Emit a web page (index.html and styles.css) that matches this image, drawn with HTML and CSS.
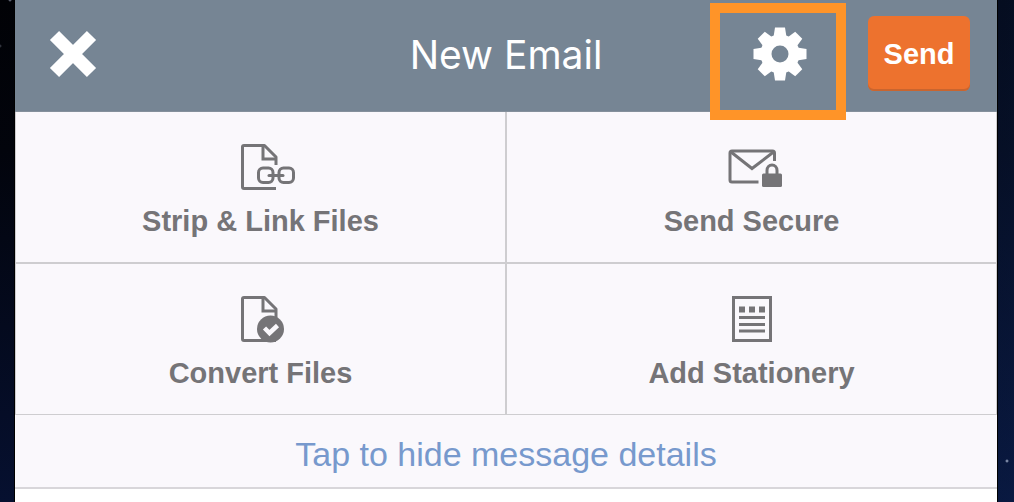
FILE: index.html
```html
<!DOCTYPE html>
<html lang="en">
<head>
  <meta charset="UTF-8" />
  <meta name="viewport" content="width=device-width, initial-scale=1.0"/>
  <title>New Email</title>
  <link rel="stylesheet" href="styles.css">
</head>
<body>
  <div class="compose">
    <header class="compose-header">
      <button type="button" class="icon-button close-button" aria-label="Close">
        <svg width="48" height="48" viewBox="0 0 48 48">
          <path d="M5.500 5.500 L42.500 42.500 M42.500 5.500 L5.500 42.500" stroke="#fff" stroke-width="13" fill="none"/>
        </svg>
      </button>
      <h1>New Email</h1>
      <div class="header-actions">
        <button type="button" class="icon-button settings-button" aria-label="Settings">
          <svg width="54" height="54" viewBox="-27 -27 54 54">
            <g fill="#fff">
              <path id="tooth" d="M-5 -26.500 H5 L6.500 -17 H-6.500 Z"/>
              <use href="#tooth" transform="rotate(45)"/>
              <use href="#tooth" transform="rotate(90)"/>
              <use href="#tooth" transform="rotate(135)"/>
              <use href="#tooth" transform="rotate(180)"/>
              <use href="#tooth" transform="rotate(225)"/>
              <use href="#tooth" transform="rotate(270)"/>
              <use href="#tooth" transform="rotate(315)"/>
            </g>
            <circle r="14" fill="none" stroke="#fff" stroke-width="11"/>
          </svg>
        </button>
        <button type="submit" class="send-button">Send</button>
      </div>
    </header>

    <main>
      <div class="options">
        <button type="button" class="option">
          <svg width="70" height="48" viewBox="-14 0 70 48" fill="none" stroke="#757477" stroke-width="3">
            <path d="M36 22 V14 L24.500 2.500 H4 Q2.500 2.500 2.500 4 V44 Q2.500 45.500 4 45.500 H36" stroke-linejoin="round"/>
            <path d="M23 3 V16 H36"/>
            <rect x="18.500" y="25" width="14.500" height="14.500" rx="4.500"/>
            <rect x="39" y="25" width="14.500" height="14.500" rx="4.500"/>
            <path d="M29 32.500 H43" stroke-linecap="round"/>
          </svg>
          <span>Strip &amp; Link Files</span>
        </button>
        <button type="button" class="option">
          <svg width="62" height="48" viewBox="-6 0 62 48" fill="none" stroke="#757477" stroke-width="3">
            <path d="M47.500 18 V10 Q47.500 8 45.500 8 H5 Q3 8 3 10 V37 Q3 39 5 39 H31.500"/>
            <path d="M4 9 L25 25.500 L46.500 9"/>
            <path d="M40 32 V27.500 A5 5.500 0 0 1 50 27.500 V32"/>
            <rect x="35" y="30.500" width="20" height="13.500" rx="1.500" fill="#757477" stroke="none"/>
          </svg>
          <span>Send Secure</span>
        </button>
        <button type="button" class="option">
          <svg width="46" height="48" viewBox="-2 0 46 48" fill="none" stroke="#757477" stroke-width="3">
            <path d="M36 24 V14 L24.500 2.500 H4 Q2.500 2.500 2.500 4 V44 Q2.500 45.500 4 45.500 H36" stroke-linejoin="round"/>
            <path d="M23 3 V16 H36"/>
            <circle cx="30.500" cy="34" r="13.500" fill="#757477" stroke="none"/>
            <path d="M24.500 33 L29.500 38 L37.500 30.500" stroke="#faf8fc" stroke-width="4.500"/>
          </svg>
          <span>Convert Files</span>
        </button>
        <button type="button" class="option">
          <svg width="42" height="48" viewBox="0 0 42 48" fill="none" stroke="#757477" stroke-width="3">
            <rect x="2.500" y="2.500" width="37" height="43"/>
            <path d="M8 14.500 H14 M18 14.500 H24 M28 14.500 H34" stroke-width="6"/>
            <path d="M8 22.500 H34 M8 29.500 H34 M8 36 H34"/>
          </svg>
          <span>Add Stationery</span>
        </button>
      </div>
      <button type="button" class="details-toggle">Tap to hide message details</button>
    </main>
  </div>
</body>
</html>
```
FILE: styles.css
```css
* {
  box-sizing: border-box;
}
body {
  margin: 0;
  min-height: 100vh;
  padding: 0 17px 0 15px;
  display: flex;
  font-family: "Liberation Sans", Arial, sans-serif;
  /* night sky behind the compose sheet */
  background:
    radial-gradient(circle at 10px 0, #8d93a5 0, transparent 2px),
    radial-gradient(circle at 0 46px, #4a4d58 0, transparent 2px),
    radial-gradient(circle at 1007px 461px, #b4bfd8 0, transparent 2px),
    linear-gradient(100deg, transparent 60%, rgba(14, 38, 90, 0.4)),
    linear-gradient(#010206 0%, #02040c 30%, #061030 100%);
}
button {
  border: none;
  margin: 0;
  padding: 0;
  font-family: inherit;
  cursor: pointer;
}
svg {
  display: block;
}
.compose {
  flex: 1;
  background: #fff;
  box-shadow: 0 0 0 1px #000;
}
.compose-header {
  display: grid;
  grid-template-columns: 1fr auto 1fr;
  align-items: center;
  padding: 16px 27px 20px;
  background: #768594;
  border-bottom: 1px solid #85909c;
}
.compose-header h1 {
  margin: 0;
  padding-top: 2px;
  font-family: Inter, "Liberation Sans", sans-serif;
  font-size: 39px;
  font-weight: 400;
  line-height: 48px;
  color: #fff;
}
.icon-button {
  background: none;
}
.close-button {
  justify-self: start;
  margin-left: 7px;
}
.header-actions {
  display: flex;
  justify-content: flex-end;
  align-items: center;
  gap: 61px;
}
.settings-button {
  position: relative;
}
/* orange frame that points out the settings button */
.settings-button::after {
  content: "";
  position: absolute;
  inset: -24px -39px -39px -43px;
  border: 10px solid #ff9428;
}
.send-button {
  width: 102px;
  height: 75px;
  padding-top: 2px;
  border-radius: 6px;
  background: #ed722e;
  box-shadow: inset 0 -2px 0 #c9652f;
  color: #fff;
  font-size: 29px;
  font-weight: bold;
}
.options {
  display: grid;
  grid-template-columns: 1fr 1fr;
  gap: 2px;
  padding: 0 1px 1px;
  background: #cecdd0;
}
.option {
  display: flex;
  flex-direction: column;
  align-items: center;
  gap: 13px;
  padding: 31px 16px 24px;
  background: #faf8fc;
  color: #757477;
  font-size: 29px;
  font-weight: bold;
  line-height: 34px;
}
.details-toggle {
  display: block;
  width: 100%;
  padding: 19px 16px 13px;
  background: #faf8fc;
  border-bottom: 2px solid #d8d6da;
  color: #7799cd;
  font-size: 34px;
  line-height: 40px;
}
```
